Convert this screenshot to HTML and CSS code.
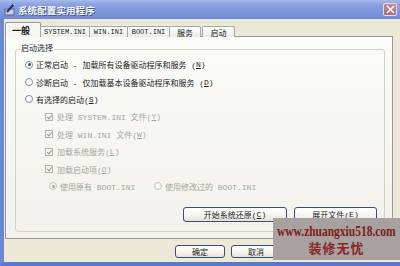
FILE: index.html
```html
<!DOCTYPE html>
<html>
<head>
<meta charset="utf-8">
<link rel="stylesheet" href="styles.css">
</head>
<body>
<div class="window">
  <div class="titlebar">
    <svg class="appicon" width="12" height="13" viewBox="0 0 12 13">
      <rect x="1" y="6" width="9" height="6" fill="#c9cfe0" stroke="#5a6480" stroke-width="1"/>
      <path d="M3 9 L10 1" stroke="#1d2f7a" stroke-width="2"/>
      <path d="M9 1 L11 2" stroke="#e0e4f0" stroke-width="1"/>
    </svg>
    <span class="title">系统配置实用程序</span>
    <span class="close">
      <svg width="9" height="9" viewBox="0 0 9 9"><path d="M1 1 L8 8 M8 1 L1 8" stroke="#fff" stroke-width="1.6"/></svg>
    </span>
  </div>
  <div class="frame">
    <div class="tabs">
      <div class="tab active">一般</div>
      <div class="tab t-sys">SYSTEM.INI</div>
      <div class="tab t-win">WIN.INI</div>
      <div class="tab t-boot">BOOT.INI</div>
      <div class="tab t-svc">服务</div>
      <div class="tab t-start">启动</div>
    </div>
    <div class="panel">
      <fieldset class="group">
        <legend>启动选择</legend>
        <div class="row"><span class="radio on"></span>正常启动 - 加载所有设备驱动程序和服务 (<u>N</u>)</div>
        <div class="row"><span class="radio"></span>诊断启动 - 仅加载基本设备驱动程序和服务 (<u>D</u>)</div>
        <div class="row"><span class="radio"></span>有选择的启动(<u>S</u>)</div>
        <div class="row sub disabled"><span class="check"></span>处理 SYSTEM.INI 文件(<u>Y</u>)</div>
        <div class="row sub disabled"><span class="check"></span>处理 WIN.INI 文件(<u>W</u>)</div>
        <div class="row sub disabled"><span class="check"></span>加载系统服务(<u>L</u>)</div>
        <div class="row sub disabled"><span class="check"></span>加载启动项(<u>O</u>)</div>
        <div class="row subradio disabled">
          <span class="opt opt1"><span class="radio on"></span>使用原有 BOOT.INI</span>
          <span class="opt"><span class="radio"></span>使用修改过的 BOOT.INI</span>
        </div>
        <div class="btnrow">
          <button class="btn b-restore">开始系统还原(<u>C</u>)</button>
          <button class="btn b-expand">展开文件(<u>E</u>)</button>
        </div>
      </fieldset>
    </div>
    <div class="footer">
      <button class="btn fbtn">确定</button>
      <button class="btn fbtn">取消</button>
      <button class="btn fbtn" aria-label="应用"></button>
      <button class="btn fbtn" aria-label="帮助"></button>
    </div>
  </div>
  <div class="watermark">
    <div class="wm-url">www.zhuangxiu518.com</div>
    <div class="wm-name">装修无忧</div>
  </div>
</div>
</body>
</html>
```

FILE: styles.css
```css
* { box-sizing: border-box; }
html, body { margin: 0; padding: 0; background: #ece9d8; }
body {
  font-family: "Liberation Mono", "Noto Sans CJK SC", monospace;
  font-size: 8px;
  color: #1e1e1e;
}
.window {
  position: relative;
  width: 400px;
  height: 266px;
  display: flex;
  flex-direction: column;
  overflow: hidden;
}
.titlebar {
  height: 19px;
  flex: none;
  display: flex;
  align-items: center;
  padding: 0 3px 0 4px;
  background: linear-gradient(180deg, #a9b9ec 0%, #8aa0e0 25%, #7d94da 70%, #7089d2 100%);
}
.appicon { flex: none; margin-right: 2px; }
.title {
  font-family: "Noto Sans CJK SC", sans-serif;
  font-weight: bold;
  font-size: 9.5px;
  letter-spacing: 0.1px;
  color: #f4f5fb;
  text-shadow: 1px 1px 0 #4a5a8e;
  flex: 1;
}
.close {
  width: 14px;
  height: 13px;
  display: flex;
  align-items: center;
  justify-content: center;
  background: linear-gradient(180deg, #c58c9c, #a86a7c);
  border: 1px solid #eadbe2;
  border-radius: 2px;
}
.frame {
  flex: 1;
  display: flex;
  flex-direction: column;
  background: #ece9d8;
  border-left: 4px solid #6c87d3;
  border-bottom: 4px solid #5b77c9;
  padding: 4px 0 0 1px;
}
.tabs {
  height: 14px;
  display: flex;
  align-items: flex-end;
  position: relative;
  z-index: 1;
  margin-bottom: -1px;
}
.tab {
  height: 11px;
  border: 1px solid #a2a9ad;
  border-bottom: none;
  border-radius: 2px 2px 0 0;
  background: linear-gradient(180deg, #ffffff, #ecebe4);
  display: flex;
  align-items: center;
  justify-content: center;
  font-size: 7px;
  color: #222;
  margin-left: -1px;
}
.tab.active {
  height: 15px;
  width: 36px;
  margin-left: 0;
  background: #f7f6f2;
  border-color: #919b9c;
  font-size: 9px;
  font-weight: bold;
  justify-content: flex-start;
  padding-left: 6px;
}
.t-sys { width: 50px; }
.t-win { width: 39px; }
.t-boot { width: 43px; }
.t-svc { width: 32px; font-size: 8px; }
.t-start { width: 33px; font-size: 8px; margin-left: 1px; }

.panel {
  width: 388px;
  height: 203px;
  flex: none;
  border: 1px solid #919b9c;
  background: linear-gradient(180deg, #fbfbf8, #f3f2ec);
  padding: 7px 7px 6px 9px;
  display: flex;
}
.group {
  flex: 1;
  margin: 0;
  border: 1px solid #d3d1c4;
  border-radius: 3px;
  padding: 2px 7px 8px 9px;
  display: flex;
  flex-direction: column;
  min-width: 0;
}
.group legend {
  font-size: 8px;
  line-height: 10px;
  padding: 0 1px;
  margin-left: -5px;
  color: #2a2a3a;
}
.row {
  height: 17.4px;
  display: flex;
  align-items: center;
  white-space: nowrap;
}
.row u { text-decoration: underline; }
.radio {
  width: 8px;
  height: 8px;
  border-radius: 50%;
  border: 1px solid #7a8ba8;
  background: #fff;
  margin-right: 3px;
  flex: none;
  display: flex;
  align-items: center;
  justify-content: center;
}
.radio.on::after {
  content: "";
  width: 3px;
  height: 3px;
  border-radius: 50%;
  background: #3c5a3c;
}
.row.sub { padding-left: 20px; }
.check {
  width: 8px;
  height: 8px;
  border: 1px solid #b5b5a8;
  background: #f6f6f2;
  margin-right: 4px;
  flex: none;
  position: relative;
}
.check::after {
  content: "";
  position: absolute;
  left: 1.5px;
  top: 0px;
  width: 2px;
  height: 4px;
  border-right: 1.2px solid #9a9a92;
  border-bottom: 1.2px solid #9a9a92;
  transform: rotate(40deg);
}
.disabled { color: #a6a69c; }
.disabled .radio { border-color: #c4c4ba; background: #f6f6f2; }
.disabled .radio.on::after { background: #a8a8a0; }
.row.subradio { padding-left: 24px; }
.opt { display: flex; align-items: center; }
.opt1 { width: 105px; }

.btnrow {
  margin-top: 12px;
  display: flex;
  justify-content: flex-end;
  gap: 7px;
}
.btn {
  font-family: "Liberation Mono", "Noto Sans CJK SC", monospace;
  font-size: 8px;
  color: #1e1e1e;
  height: 15px;
  padding: 0;
  border: 1px solid #3f4e70;
  border-radius: 3px;
  background: linear-gradient(180deg, #ffffff 0%, #f4f3ee 60%, #e3e1d8 100%);
  display: flex;
  align-items: center;
  justify-content: center;
}
.btn u { text-decoration: underline; }
.b-restore { width: 104px; }
.b-expand { width: 83px; }
.footer {
  margin-top: 6px;
  width: 388px;
  display: flex;
  justify-content: flex-end;
  gap: 6px;
}
.fbtn { width: 50px; height: 13px; }

.watermark {
  position: absolute;
  left: 273px;
  top: 218px;
  width: 127px;
  height: 42px;
  background: #a8a19f;
  display: flex;
  flex-direction: column;
  align-items: center;
  color: #7d1c1c;
}
.wm-url {
  font-family: "Liberation Serif", serif;
  font-weight: bold;
  font-size: 14px;
  line-height: 16px;
  margin-top: 6px;
  transform: scaleX(0.82);
  white-space: nowrap;
}
.wm-name {
  font-family: "Noto Sans CJK SC", sans-serif;
  font-weight: bold;
  font-size: 13px;
  line-height: 16px;
  letter-spacing: 1px;
  color: #8a2626;
}
```
